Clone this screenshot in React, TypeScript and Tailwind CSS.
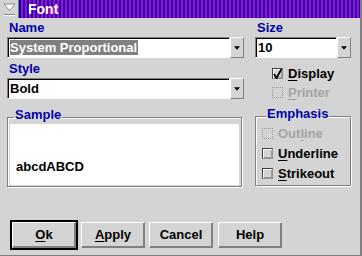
import React from "react";

const font = "font-['Liberation_Sans',Arial,sans-serif]";

function Arrow() {
  return (
    <svg width="14" height="19" viewBox="0 0 14 19">
      <path d="M3.5 8 h7 l-3.5 4 z" fill="#000" />
    </svg>
  );
}

function Combo({ children }: { children: React.ReactNode }) {
  return (
    <div className="flex h-[21px]">
      {/* text field, sunken */}
      <div className="flex-1 flex items-center bg-white border-t border-l border-[#808080] border-b-white border-r-white border-b border-r shadow-[inset_1px_1px_0_#000] pl-[2px]">
        {children}
      </div>
      {/* drop button, raised */}
      <div className="w-[14px] bg-[#d4d4d4] border-t border-l border-white border-r border-b border-r-[#808080] border-b-[#808080] flex items-center justify-center">
        <Arrow />
      </div>
    </div>
  );
}

function Check({
  label,
  mnemonic,
  checked,
  disabled,
}: {
  label: string;
  mnemonic: number;
  checked?: boolean;
  disabled?: boolean;
}) {
  const before = label.slice(0, mnemonic);
  const mid = label.slice(mnemonic, mnemonic + 1);
  const after = label.slice(mnemonic + 1);
  return (
    <div className="flex items-center gap-[5px]">
      {disabled ? (
        <div className="w-[11px] h-[11px] border border-dotted border-[#9a9a9a]" />
      ) : (
        <div className="w-[11px] h-[11px] bg-[#d4d4d4] border border-[#404040] border-b-[#909090] border-r-[#909090] shadow-[inset_1px_1px_0_#ffffff,inset_-1px_-1px_0_#9a9a9a] flex items-center justify-center">
          {checked && (
            <svg width="9" height="10" viewBox="0 0 9 10">
              <path d="M1 5 L3.5 9 L8.5 0" stroke="#000" strokeWidth="1.8" fill="none" />
            </svg>
          )}
        </div>
      )}
      <span
        className={`text-[13px] font-bold leading-[15px] ${
          disabled ? "text-[#a4a4a4]" : "text-black"
        }`}
      >
        {before}
        <span className="underline underline-offset-[2px]">{mid}</span>
        {after}
      </span>
    </div>
  );
}

function Button({
  label,
  mnemonic,
  isDefault,
}: {
  label: string;
  mnemonic?: number;
  isDefault?: boolean;
}) {
  const content =
    mnemonic === undefined ? (
      label
    ) : (
      <>
        {label.slice(0, mnemonic)}
        <span className="underline underline-offset-[2px]">{label.slice(mnemonic, mnemonic + 1)}</span>
        {label.slice(mnemonic + 1)}
      </>
    );
  const inner = (
    <div className="w-[64px] h-[26px] bg-[#d4d4d4] border-t border-l border-white border-r border-b border-r-[#808080] border-b-[#808080] shadow-[inset_-1px_-1px_0_#808080] flex items-center justify-center text-[13px] font-bold text-black">
      {content}
    </div>
  );
  return isDefault ? <div className="border-2 border-black">{inner}</div> : inner;
}

export default function App() {
  return (
    <div
      className={`${font} w-[362px] h-[256px] bg-[#d4d4d4] border-r-2 border-b border-[#808080] flex flex-col overflow-hidden`}
    >
      {/* Title bar */}
      <div className="h-[18px] flex shrink-0">
        <div className="w-[19px] h-[18px] bg-[#d4d4d4] border-r border-[#808080] flex items-center justify-center">
          <svg width="15" height="14" viewBox="0 0 15 14">
            <path d="M2 2 H13 L7.5 8.5 Z" fill="#fff" stroke="#8a8a8a" strokeWidth="1" />
            <path d="M2 12.5 H13" stroke="#8a8a8a" strokeWidth="1" />
            <path d="M2 13.5 H13" stroke="#fff" strokeWidth="1" />
          </svg>
        </div>
        <div className="flex-1 flex items-center pl-[9px] bg-[repeating-linear-gradient(90deg,#0000b8_0px,#0000b8_2px,#c000c0_2px,#c000c0_4px)]">
          <span className="text-white font-bold text-[14px] leading-[16px]">Font</span>
        </div>
      </div>

      {/* Body */}
      <div className="flex pl-[7px]">
        {/* Left column */}
        <div className="w-[237px] flex flex-col">
          <div className="mt-[2px] h-[15px] leading-[15px] pl-[2px] text-[13px] font-bold text-[#0000aa]">Name</div>
          <div className="mt-[2px]">
            <Combo>
              <span className="bg-[#808080] text-white text-[13px] font-bold leading-[15px] pr-[1px]">
                System Proportional
              </span>
            </Combo>
          </div>
          <div className="mt-[3px] h-[15px] leading-[15px] pl-[2px] text-[13px] font-bold text-[#0000aa]">Style</div>
          <div className="mt-[2px]">
            <Combo>
              <span className="text-black text-[13px] font-bold leading-[15px]">Bold</span>
            </Combo>
          </div>
          <fieldset className="mt-[8px] h-[80px] border border-[#808080] shadow-[inset_1px_1px_0_#fff,1px_1px_0_#fff] px-[2px] pb-[1px] w-[235px]">
            <legend className="ml-[4px] px-[1px] pb-[5px] leading-[15px] text-[13px] font-bold text-[#0000aa]">
              Sample
            </legend>
            <div className="-mt-[3px] h-[61px] bg-white flex items-end pl-[6px] pb-[11px]">
              <span className="text-[13px] font-bold leading-[15px] text-black">abcdABCD</span>
            </div>
          </fieldset>
        </div>

        {/* Right column */}
        <div className="ml-[11px] w-[96px] flex flex-col">
          <div className="mt-[2px] h-[15px] leading-[15px] pl-[2px] text-[13px] font-bold text-[#0000aa]">Size</div>
          <div className="mt-[2px]">
            <Combo>
              <span className="text-black text-[13px] font-bold leading-[15px]">10</span>
            </Combo>
          </div>
          <div className="mt-[6px] h-[19px] flex items-center pl-[17px]">
            <Check label="Display" mnemonic={0} checked />
          </div>
          <div className="h-[19px] flex items-center pl-[17px]">
            <Check label="Printer" mnemonic={0} disabled />
          </div>
          <fieldset className="mt-[4px] h-[80px] border border-[#808080] shadow-[inset_1px_1px_0_#fff,1px_1px_0_#fff] pl-[6px] w-[96px]">
            <legend className="ml-[4px] px-[1px] pb-[5px] leading-[15px] text-[13px] font-bold text-[#0000aa]">
              Emphasis
            </legend>
            <div className="-mt-[3px] flex flex-col">
              <div className="h-[20px] flex items-center">
                <Check label="Outline" mnemonic={3} disabled />
              </div>
              <div className="h-[20px] flex items-center">
                <Check label="Underline" mnemonic={0} />
              </div>
              <div className="h-[20px] flex items-center">
                <Check label="Strikeout" mnemonic={0} />
              </div>
            </div>
          </fieldset>
        </div>
      </div>

      {/* Buttons */}
      <div className="mt-[33px] pl-[10px] flex items-center">
        <Button label="Ok" mnemonic={0} isDefault />
        <div className="ml-[3px]">
          <Button label="Apply" mnemonic={0} />
        </div>
        <div className="ml-[4px]">
          <Button label="Cancel" />
        </div>
        <div className="ml-[5px]">
          <Button label="Help" />
        </div>
      </div>
    </div>
  );
}
